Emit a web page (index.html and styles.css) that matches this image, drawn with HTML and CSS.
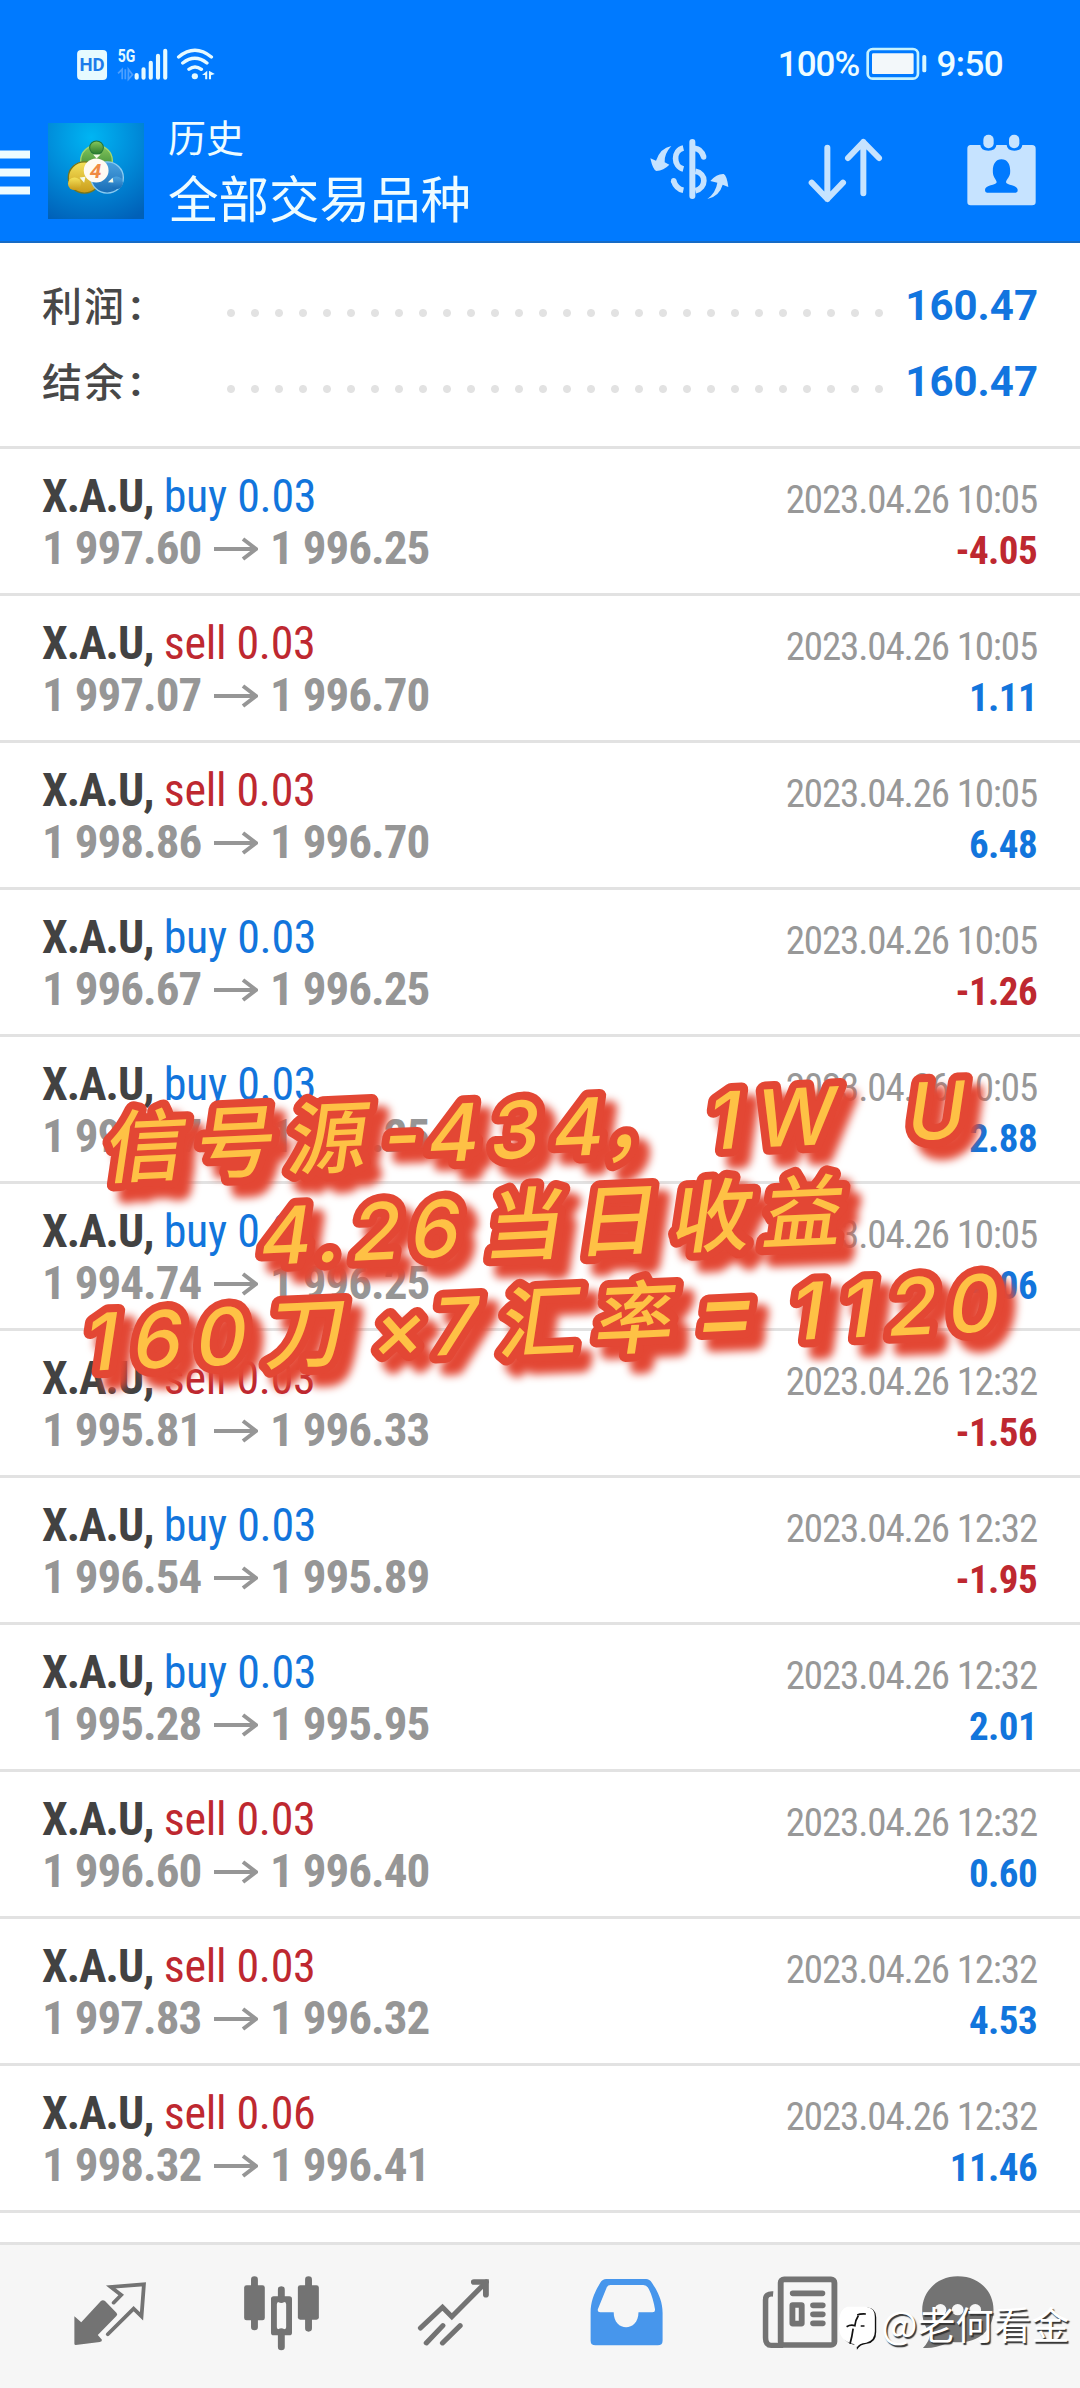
FILE: index.html
```html
<!DOCTYPE html>
<html lang="zh-CN">
<head>
<meta charset="utf-8">
<title>历史</title>
<link rel="stylesheet" href="styles.css">
</head>
<body>
<div class="screen">
<header class="top">
  <div class="status">
    <svg class="signal" viewBox="215 75 420 115" preserveAspectRatio="none">
      <rect x="224" y="90" width="87" height="90" rx="12" fill="#e6faff"/>
      <text x="231" y="154" font-size="56" font-weight="700" textLength="73" lengthAdjust="spacingAndGlyphs" fill="#1c7bea">HD</text>
      <text x="342" y="126" font-size="56" font-weight="700" textLength="51" lengthAdjust="spacingAndGlyphs" fill="#e6faff">5G</text>
      <path d="M343 160l12-12v30M364 148v30M373 148v30l12-14z" stroke="#4b9fff" stroke-width="5" fill="none"/>
      <path d="M397 173v-8M417 173v-25M438 173v-45M459 173v-66M480 173v-81" stroke="#e6faff" stroke-width="12" stroke-linecap="round"/>
      <path d="M519 111q47-40 95 0M531 129q35-28 70 0M549 148q17-14 36 0" stroke="#e6faff" stroke-width="10" stroke-linecap="round" fill="none"/>
      <circle cx="566" cy="169" r="9" fill="#e6faff"/>
      <path d="M587 165l15-13v26h-6v-13zM607 152l17 10-11 4v12h-6z" fill="#e6faff"/>
    </svg>
    <div class="status-right">
      <span class="pct">100%</span>
      <svg class="battery" viewBox="800 80 190 106">
        <rect x="808" y="89" width="151" height="89" rx="15" fill="none" stroke="#c5f2ff" stroke-width="8"/>
        <rect x="821" y="102" width="125" height="62" rx="4" fill="#f3f8fa"/>
        <rect x="972" y="107" width="12" height="52" rx="5" fill="#d8f7ff"/>
      </svg>
      <span class="clock">9:50</span>
    </div>
  </div>
  <div class="bar">
    <svg class="menu" viewBox="0 0 30 46"><path d="M0 4.500h30M0 22.500h30M0 40.500h30" stroke="#eefcff" stroke-width="8"/></svg>
    <svg class="logo" viewBox="139 308 279 289" preserveAspectRatio="none">
      <defs>
        <radialGradient id="sky" cx=".45" cy=".15" r=".95"><stop offset="0" stop-color="#00b5f3"/><stop offset=".5" stop-color="#008bd9"/><stop offset="1" stop-color="#0060b8"/></radialGradient>
        <linearGradient id="green" x2="0" y2="1"><stop offset="0" stop-color="#87c85d"/><stop offset="1" stop-color="#287a2c"/></linearGradient>
        <linearGradient id="gold" x2="0" y2="1"><stop offset="0" stop-color="#f5e25a"/><stop offset="1" stop-color="#c99b19"/></linearGradient>
        <linearGradient id="blue" x2="0" y2="1"><stop offset="0" stop-color="#4da3e0"/><stop offset="1" stop-color="#176cb6"/></linearGradient>
      </defs>
      <rect x="139" y="308" width="279" height="289" fill="url(#sky)"/>
      <circle cx="280" cy="421" r="46" fill="url(#green)" stroke="#a4d66d" stroke-width="4"/>
      <circle cx="245" cy="472" r="47" fill="url(#gold)" stroke="#76751c" stroke-width="4"/>
      <circle cx="311" cy="472" r="47" fill="url(#blue)" stroke="#8acbf1" stroke-width="4"/>
      <circle cx="280" cy="382" r="20" fill="url(#green)" stroke="#247636" stroke-width="3"/>
      <circle cx="216" cy="491" r="19" fill="url(#gold)"/>
      <circle cx="338" cy="488" r="19" fill="url(#blue)"/>
      <path d="M270 403l10 12 12-12zM231 472l17-2-4 18zM313 486l14-13 2 14z" fill="#f5fae8"/>
      <circle cx="279" cy="451" r="36" fill="#fffaf2"/>
      <text x="260" y="473" font-size="58" font-weight="700" font-style="italic" fill="#f08a43" textLength="34" lengthAdjust="spacingAndGlyphs">4</text>
    </svg>
    <div class="titles"><div class="small">历史</div><div class="big">全部交易品种</div></div>
    <svg class="tools" viewBox="140 330 1190 240" fill="#c6e3ff">
      <g fill="none" stroke="#c6e3ff">
        <path d="M279 366v162" stroke-width="18" stroke-linecap="round"/>
        <path d="M252 384c-31 7-31 55 0 63M222 481c6 18 16 27 30 30M286 385c15 1 22 9 27 26M288 454c34 6 34 49 0 58" stroke-width="17"/>
        <path d="M684 383v154M637 488l47 49 47-49M792 520V366M746 414l46-48 47 48" stroke-width="18" stroke-linecap="round" stroke-linejoin="round"/>
      </g>
      <circle cx="313" cy="411" r="8"/><circle cx="223" cy="482" r="8"/>
      <path d="M216 378q-22 24-20 49l14 7q-17 18-39 19-10-2-18-38l17 7q13-38 46-44zM324 537q26-20 30-49l-21-5q19-22 40-21 9 3 14 39l-17-7q-10 35-46 43z"/>
      <path fill-rule="evenodd" d="M1114 375h29q1 17 24 17t24-17h31q1 17 23 17t24-17h29q11 0 11 11v160q0 10-11 10h-184q-10 0-10-10V386q0-11 10-11zM1206 418c-18 0-28 18-25 43 2 12 11 19 11 26-1 9-36 8-35 24q0 7 6 7h86q6 0 6-7c1-16-34-15-35-24 0-8 10-15 12-26 3-25-6-43-26-43z"/>
      <rect x="1152" y="344" width="31" height="41" rx="15"/><rect x="1229" y="344" width="31" height="41" rx="15"/>
    </svg>
  </div>
</header>
<section class="summary">
  <div class="sum"><span class="label">利润</span><span class="colon">:</span><span class="dots"></span><span class="total">160.47</span></div>
  <div class="sum"><span class="label">结余</span><span class="colon">:</span><span class="dots"></span><span class="total">160.47</span></div>
</section>
<main class="deals" id="deals"></main>
<nav class="nav">
  <svg viewBox="69.7 200 499.5 280" preserveAspectRatio="none" fill="#737373">
    <path d="M216 351l20 18 57-64q6-5 12 0l33 35q5 5 0 10l-54 57 12 14q1 5-6 7l-70 9q-4 0-4-4z"/>
    <path d="M330 310l22-23-30-24 96-8-7 96-23-23-75 77" fill="none" stroke="#737373" stroke-width="11" stroke-linecap="round"/>
  </svg>
  <svg viewBox="569.2 200 499.5 280" preserveAspectRatio="none" fill="#737373">
    <path d="M739 241v142M896 241v146M817 271v30M817 397v46" stroke="#737373" stroke-width="20" stroke-linecap="round"/>
    <rect x="709" y="258" width="60" height="105" rx="7"/><rect x="865" y="258" width="61" height="103" rx="7"/>
    <path fill-rule="evenodd" d="M795 291h45q8 0 8 8v101q0 8-8 8h-45q-8 0-8-8V299q0-8 8-8zM810 308q-6 0-6 7v69q0 6 6 6h15q6 0 6-6v-69q0-7-6-7z"/>
  </svg>
  <svg viewBox="1068.6 200 499.5 280" preserveAspectRatio="none" fill="none" stroke="#737373" stroke-width="15" stroke-linecap="round">
    <path d="M1221 386l64-62 27 28 100-104M1238 431l48-52M1285 431l51-52"/><path stroke-width="17" d="M1376 248h35v38"/>
  </svg>
  <svg viewBox="0 200 499.500 280" preserveAspectRatio="none">
    <path fill="#4796ec" fill-rule="evenodd" d="M192 239h116q10 0 17 11c18 28 31 56 31 90v84q0 14-14 14H161q-14 0-14-14v-84c0-35 12-62 28-90q7-11 17-11zM205 257q-8 0-11 7l-26 66q-2 9 7 9h39c0 60 72 60 72 0h41q8 0 7-9c-3-20-9-43-18-61q-6-12-16-12z"/>
  </svg>
  <svg viewBox="499.500 200 499.500 280" preserveAspectRatio="none" fill="none" stroke="#737373">
    <rect x="699" y="240" width="156" height="197" rx="10" stroke-width="17"/>
    <path d="M677 284q-22-2-22 18v113q0 23 17 23h35" stroke-width="16"/>
    <path d="M734 282h86M793 318h28M793 345h28M793 372h28" stroke-width="17" stroke-linecap="round"/>
    <rect x="733" y="317" width="27" height="56" rx="1" stroke-width="17"/>
  </svg>
  <svg viewBox="999 200 499.500 280" preserveAspectRatio="none">
    <path fill="#737373" d="M1213 231c66 0 104 48 104 100 0 60-42 98-100 98-20 0-25-3-36 3q-35 17-69 14 18-17 22-44c-18-21-24-43-24-70 0-55 43-101 103-101z"/>
    <circle cx="1163" cy="331" r="17" fill="#f6f6f6"/><circle cx="1213" cy="331" r="17" fill="#f6f6f6"/><circle cx="1264" cy="331" r="17" fill="#f6f6f6"/>
  </svg>
</nav>
<svg class="note" viewBox="0 0 1080 400">
  <g transform="translate(103 137) rotate(-2.600) skewX(-11)"><text y="0" x="0 90 183 278 322 385 447 499 603 651 700 802">信号源-434，1W U</text></g>
  <g transform="translate(257 225) rotate(-2.500) skewX(-11)"><text y="0" x="0 58 92 151 226 319 413 504">4.26当日收益</text></g>
  <g transform="translate(82 331) rotate(-2.500) skewX(-11)"><text y="0" x="0 48 111 182 288 348 416 511 610 707 757 804 864">160刀×7汇率<tspan class="equals">=</tspan>1120</text></g>
</svg>
<div class="mark">
  <svg viewBox="868 320 112 135" preserveAspectRatio="none">
    <path d="M897 327h52q27 3 27 30v44q0 32-27 35-20 2-29 18l-1-14q-44-4-46-58 0-50 24-55z" fill="#111"/>
    <path d="M892 325h54q26 3 26 30v44q0 28-25 34-22 2-27 14l-9-10q-43-8-44-55 0-50 25-57z" fill="#fff"/>
    <path d="M921 350q8-4 25-3M890 385q12-7 24-3 2-18 10-30M909 391q-3 24-9 45M931 383h11" fill="none" stroke="#111" stroke-width="5"/>
  </svg>
  <span>@老何看金</span>
</div>
</div>
<script src="deals.js"></script>
</body>
</html>
```
FILE: styles.css
```css
* { box-sizing: border-box; }
body { margin: 0; background: #fff; font-family: Roboto, "Noto Sans CJK SC", sans-serif; }
svg { display: block; flex: none; }
.screen { position: relative; width: 1080px; height: 2388px; overflow: hidden; display: flex; flex-direction: column; }
.top { flex: none; height: 243px; background: #007aff; border-bottom: 2px solid #176bc5; color: #eefcff; }
.status { display: flex; justify-content: space-between; height: 100px; padding: 45px 77px 0 74px; }
.signal { width: 144.6px; height: 38.3px; }
.status-right { display: flex; align-items: flex-start; }
.status-right span { font-size: 35px; font-weight: 500; line-height: 40px; white-space: nowrap; }
.pct { letter-spacing: -1px; margin-right: 6px; }
.battery { width: 63.3px; height: 35.3px; margin: 1px 8px 0 0; }
.clock { letter-spacing: -.6px; }
.bar { display: flex; height: 141px; align-items: flex-start; }
.menu { width: 30px; height: 46px; margin-top: 50px; }
.logo { width: 96px; height: 96px; margin: 23px 0 0 18px; }
.titles { margin: 9px 0 0 24px; width: 460px; font-family: "Noto Sans CJK SC", sans-serif; }
.small { font-size: 38px; line-height: 54px; }
.big { font-size: 50.5px; line-height: 66px; }
.tools { width: 396.7px; height: 80px; margin: 30px 0 0 18px; }
.summary { flex: none; height: 203px; padding: 25px 42px 0; }
.sum { display: flex; align-items: center; height: 75.5px; }
.label { width: 84px; font: 500 40px/75px "Noto Sans CJK SC", sans-serif; letter-spacing: 2px; margin-top: -2px; color: #484848; }
.colon { width: 93px; padding-left: 4px; font-size: 42px; font-weight: 700; color: #484848; }
.dots { width: 672px; height: 8px; margin-top: 15px; background: radial-gradient(circle, #e2e2e2 3.5px, transparent 4.5px) 0 0 / 24px 8px; }
.total { flex: 1; text-align: right; white-space: nowrap; font-size: 42px; font-weight: 700; color: #1275df; }
.deals { height: 1796px; flex: none; overflow: hidden; font-family: "Roboto Condensed", Roboto, sans-serif; font-stretch: 75%; }
.deal { display: flex; justify-content: space-between; height: 147px; padding: 22px 43px 0 42px; border-top: 3px solid #e2e2e2; white-space: nowrap; }
.name { font-size: 46px; line-height: 51px; letter-spacing: -.3px; color: #424242; }
.name b { font-weight: 700; letter-spacing: -1px; }
.buy { color: #1275dc; }
.sell { color: #be2830; }
.prices { display: flex; align-items: center; font-size: 47px; line-height: 51px; font-weight: 700; letter-spacing: -.95px; color: #969696; }
.prices span { width: 157px; }
.prices svg { width: 44px; height: 24px; margin: 2px 12px 0 15px; }
.right { text-align: right; padding-top: 4px; }
.date { font-size: 39px; line-height: 51px; letter-spacing: -1.15px; color: #989898; }
.profit { font-size: 39px; line-height: 51px; font-weight: 700; letter-spacing: -.6px; }
.nav { display: grid; grid-template-columns: repeat(6, 172px); height: 146px; flex: none; padding: 21px 24px 0; background: #f6f6f6; border-top: 3px solid #e2e2e2; }
.nav svg { width: 172px; height: 93.3px; }
.note { position: absolute; left: 0; top: 1040px; width: 1080px; height: 400px; overflow: visible; filter: drop-shadow(11px 12px 4px #e34734); }
.note text { font: 450 79px Inter, "Noto Sans CJK SC", sans-serif; fill: #fec145; stroke: #e34734; stroke-width: 16px; stroke-linejoin: round; paint-order: stroke; }
.equals { font-size: 93px; }
.mark { position: absolute; left: 839px; top: 2296px; display: flex; align-items: center; color: #fff; }
.mark svg { width: 38.6px; height: 45px; margin-top: 9px; }
.mark span { margin-left: 4px; font: 38px/54px "Noto Sans CJK SC", sans-serif; white-space: nowrap; text-shadow: 1.5px 1.5px 1px #333; }
```
FILE: deals.js
```js
const deals = [
  ['buy', '0.03', '1 997.60', '1 996.25', '10:05', '-4.05'],
  ['sell', '0.03', '1 997.07', '1 996.70', '10:05', '1.11'],
  ['sell', '0.03', '1 998.86', '1 996.70', '10:05', '6.48'],
  ['buy', '0.03', '1 996.67', '1 996.25', '10:05', '-1.26'],
  ['buy', '0.03', '1 993.37', '1 996.25', '10:05', '2.88'],
  ['buy', '0.03', '1 994.74', '1 996.25', '10:05', '4.06'],
  ['sell', '0.03', '1 995.81', '1 996.33', '12:32', '-1.56'],
  ['buy', '0.03', '1 996.54', '1 995.89', '12:32', '-1.95'],
  ['buy', '0.03', '1 995.28', '1 995.95', '12:32', '2.01'],
  ['sell', '0.03', '1 996.60', '1 996.40', '12:32', '0.60'],
  ['sell', '0.03', '1 997.83', '1 996.32', '12:32', '4.53'],
  ['sell', '0.06', '1 998.32', '1 996.41', '12:32', '11.46']
];
document.getElementById('deals').innerHTML = deals.map(([side, lot, open, close, time, profit]) => `
<div class="deal">
  <div>
    <div class="name"><b>X.A.U,</b> <span class="${side}">${side} ${lot}</span></div>
    <div class="prices"><span>${open}</span><svg viewBox="0 0 44 24"><path d="M0 12h42M29 2l13 10-13 10" fill="none" stroke="#969696" stroke-width="4"/></svg><span>${close}</span></div>
  </div>
  <div class="right">
    <div class="date">2023.04.26 ${time}</div>
    <div class="profit ${profit[0] === '-' ? 'sell' : 'buy'}">${profit}</div>
  </div>
</div>`).join('') + '<div class="deal"></div>';
```
